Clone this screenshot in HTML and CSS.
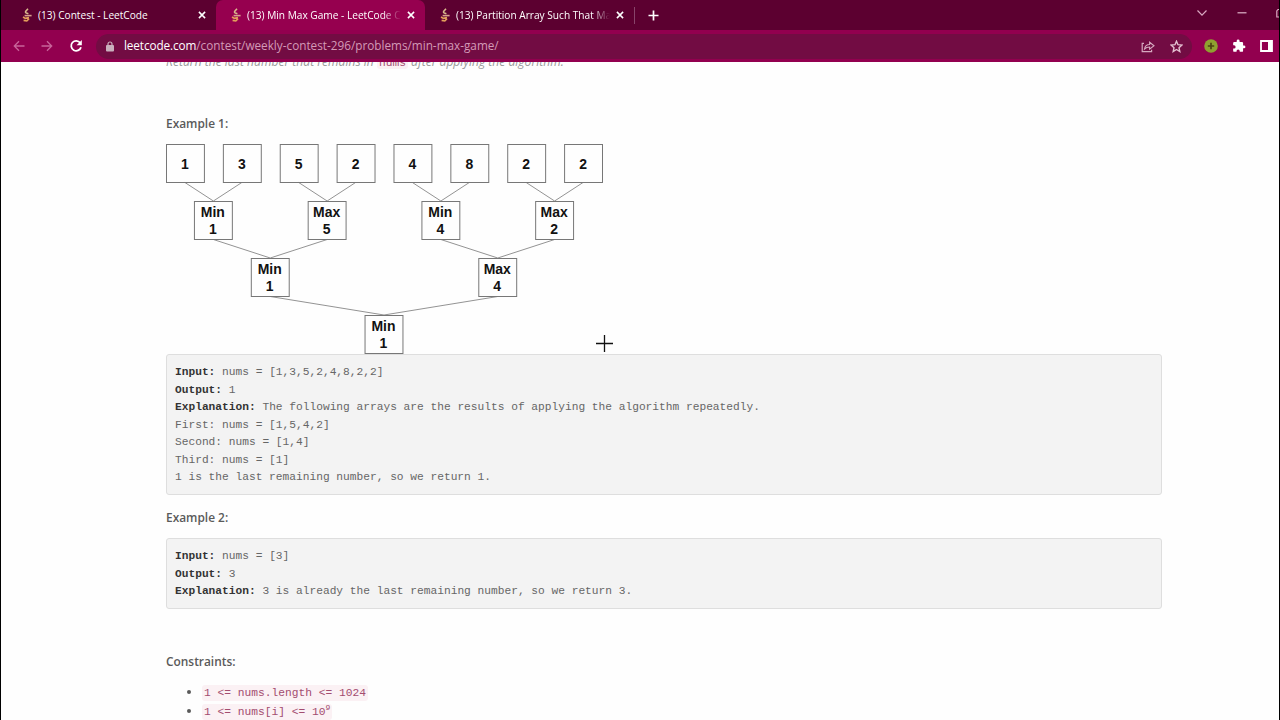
FILE: index.html
```
<!DOCTYPE html>
<html lang="en">
<head>
    <meta charset="UTF-8">
    <meta name="viewport" content="width=device-width, initial-scale=1.0">
    <title>(13) Min Max Game - LeetCode Contest</title>
    <link rel="stylesheet" href="styles.css">
</head>
<body>
    <svg class="defs" width="0" height="0">
        <symbol id="leetcode" viewBox="0 0 12 14">
            <path d="M7 .8 4.8 3.200Q4 4.500 5.400 5.100L7.400 5.700" fill="none" stroke="#d8b98c" stroke-width="1.6"/>
            <path d="M3.600 7.600h7" stroke="#d7a08b" stroke-width="1.6"/>
            <path d="M2 9 4.400 10.400 8 9.600M8 10.600 5.800 13 2.600 12.400" fill="none" stroke="#e3a05c" stroke-width="1.6"/>
        </symbol>
        <symbol id="close" viewBox="0 0 8 8">
            <path d="M.9.9 7.1 7.1M7.1.9.9 7.1" stroke="#fff" stroke-width="1.5"/>
        </symbol>
    </svg>

    <div class="browser">
        <div class="tab-bar">
            <div class="tab tab-first">
                <svg class="favicon"><use href="#leetcode"/></svg>
                <span class="tab-title">(13) Contest - LeetCode</span>
                <svg class="close"><use href="#close"/></svg>
            </div>
            <div class="tab active">
                <svg class="favicon"><use href="#leetcode"/></svg>
                <span class="tab-title fade">(13) Min Max Game - LeetCode Contest</span>
                <svg class="close"><use href="#close"/></svg>
            </div>
            <div class="tab">
                <svg class="favicon"><use href="#leetcode"/></svg>
                <span class="tab-title fade">(13) Partition Array Such That Maximum</span>
                <svg class="close"><use href="#close"/></svg>
            </div>
            <div class="tab-divider"></div>
            <svg class="new-tab" width="11" height="11" viewBox="0 0 11 11"><path d="M5.5.5v10M.5 5.5h10" stroke="#fff" stroke-width="1.7"/></svg>
            <div class="window-buttons">
                <svg width="12" height="8" viewBox="0 0 12 8"><path d="M1.5 1.5 6 6.2l4.5-4.7" fill="none" stroke="#d9a9c1" stroke-width="1.2"/></svg>
                <svg width="10" height="8" viewBox="0 0 10 8"><path d="M.5 3.8h9" stroke="#dfb5ca" stroke-width="1.2"/></svg>
                <svg width="3" height="10" viewBox="0 0 3 10"><path d="M3 1.5H2L.8 3v6H3" fill="none" stroke="#d9a9c1" stroke-width="1.2"/></svg>
            </div>
        </div>

        <div class="toolbar">
            <div class="nav">
                <svg width="12" height="12" viewBox="0 0 12 12"><path d="M11.5 6H1.5M6 1.3 1.3 6 6 10.7" fill="none" stroke="#c8649a" stroke-width="1.3"/></svg>
                <svg width="12" height="12" viewBox="0 0 12 12"><path d="M.5 6h10M6 1.3 10.7 6 6 10.7" fill="none" stroke="#c8649a" stroke-width="1.3"/></svg>
                <svg width="14" height="14" viewBox="0 0 14 14"><path d="M11.2 3.8A5 5 0 1 0 12 8.2" fill="none" stroke="#fff" stroke-width="1.8"/><path d="M12.8 1v5.2H7.6z" fill="#fff"/></svg>
            </div>
            <div class="address">
                <svg class="lock" width="8" height="11" viewBox="0 0 8 11"><path d="M2 5V3a2 2 0 0 1 4 0v2" fill="none" stroke="#c9b0bd" stroke-width="1.2"/><rect y="4" width="8" height="6.5" rx="1" fill="#c9b0bd"/></svg>
                <span class="url"><b>leetcode.com</b>/contest/weekly-contest-296/problems/min-max-game/</span>
                <svg class="share" width="14" height="13" viewBox="0 0 14 13"><path d="M3 3.3H1.2v8.4h9.4V9.8" fill="none" stroke="#d5a9bf" stroke-width="1.2"/><path d="M3.5 9C4 6 5.8 4.5 8.6 4.500V2.2L13 5.8 8.6 9.2V7C6.5 7 5 7.5 3.5 9z" fill="none" stroke="#d5a9bf" stroke-width="1.1"/></svg>
                <svg width="13" height="13" viewBox="0 0 13 13"><path d="m6.5 1.2 1.5 3.5 3.9.4L9 7.7l.8 3.8-3.3-2-3.3 2L4 7.7 1.1 5.1 5 4.7z" fill="none" stroke="#e3bfd0" stroke-width="1.4"/></svg>
            </div>
            <div class="extensions">
                <svg width="14" height="14" viewBox="0 0 14 14"><circle cx="7" cy="7" r="6.8" fill="#8fa030"/><path d="M7 3.8v6.4M3.8 7h6.4" stroke="#4d4212" stroke-width="1.7"/></svg>
                <svg width="14" height="14" viewBox="0 0 24 24"><path d="M20.5 11H19V7a2 2 0 0 0-2-2h-4V3.500a2.5 2.5 0 0 0-5 0V5H4a2 2 0 0 0-2 2v3.8h1.500a2.7 2.7 0 0 1 0 5.400H2V20a2 2 0 0 0 2 2h3.800v-1.500a2.700 2.700 0 0 1 5.400 0V22H17a2 2 0 0 0 2-2v-4h1.500a2.500 2.500 0 0 0 0-5z" fill="#fff"/></svg>
                <svg width="13" height="12" viewBox="0 0 13 12"><path d="M1 1h11v10H1z" fill="none" stroke="#fff" stroke-width="1.8"/><path d="M8 1h4v10H8z" fill="#fff"/></svg>
            </div>
        </div>

        <div class="content">
            <div class="clipped-line"><em>Return the last number that remains in <code>nums</code> after applying the algorithm.</em></div>

            <p class="heading first-heading">Example 1:</p>
            <svg class="tree" width="437" height="210" viewBox="0 0 438 210" preserveAspectRatio="none">
                <g class="edges">
                    <path d="M19 38.500 47.500 57 76 38.500M133 38.500 161.500 57 190 38.500M247 38.500 275.500 57 304 38.500M361 38.500 389.500 57 418 38.500"/>
                    <path d="M47.500 95.500 104.500 114 161.500 95.500M275.500 95.500 332.500 114 389.500 95.500"/>
                    <path d="M104.500 152.500 218.500 171 332.500 152.500"/>
                </g>
                <g class="boxes">
                    <rect x=".5" y=".5" width="38" height="38"/>
                    <rect x="57.500" y=".5" width="38" height="38"/>
                    <rect x="114.500" y=".5" width="38" height="38"/>
                    <rect x="171.500" y=".5" width="38" height="38"/>
                    <rect x="228.500" y=".5" width="38" height="38"/>
                    <rect x="285.500" y=".5" width="38" height="38"/>
                    <rect x="342.500" y=".5" width="38" height="38"/>
                    <rect x="399.500" y=".5" width="38" height="38"/>
                    <rect x="28.500" y="57.500" width="38" height="38"/>
                    <rect x="142.500" y="57.500" width="38" height="38"/>
                    <rect x="256.500" y="57.500" width="38" height="38"/>
                    <rect x="370.500" y="57.500" width="38" height="38"/>
                    <rect x="85.500" y="114.500" width="38" height="38"/>
                    <rect x="313.500" y="114.500" width="38" height="38"/>
                    <rect x="199.500" y="171.500" width="38" height="38"/>
                </g>
                <g class="labels">
                    <text x="19" y="25">1</text>
                    <text x="76" y="25">3</text>
                    <text x="133" y="25">5</text>
                    <text x="190" y="25">2</text>
                    <text x="247" y="25">4</text>
                    <text x="304" y="25">8</text>
                    <text x="361" y="25">2</text>
                    <text x="418" y="25">2</text>
                    <text x="47" y="73.500">Min</text><text x="47" y="90.500">1</text>
                    <text x="161" y="73.500">Max</text><text x="161" y="90.500">5</text>
                    <text x="275" y="73.500">Min</text><text x="275" y="90.500">4</text>
                    <text x="389" y="73.500">Max</text><text x="389" y="90.500">2</text>
                    <text x="104" y="130.500">Min</text><text x="104" y="147.500">1</text>
                    <text x="332" y="130.500">Max</text><text x="332" y="147.500">4</text>
                    <text x="218" y="187.500">Min</text><text x="218" y="204.500">1</text>
                </g>
            </svg>
<pre><b>Input:</b> nums = [1,3,5,2,4,8,2,2]
<b>Output:</b> 1
<b>Explanation:</b> The following arrays are the results of applying the algorithm repeatedly.
First: nums = [1,5,4,2]
Second: nums = [1,4]
Third: nums = [1]
1 is the last remaining number, so we return 1.</pre>

            <p class="heading second-heading">Example 2:</p>
<pre><b>Input:</b> nums = [3]
<b>Output:</b> 3
<b>Explanation:</b> 3 is already the last remaining number, so we return 3.</pre>

            <p class="heading constraints-heading">Constraints:</p>
            <ul>
                <li><code>1 &lt;= nums.length &lt;= 1024</code></li>
                <li><code>1 &lt;= nums[i] &lt;= 10<sup>9</sup></code></li>
            </ul>
        </div>

        <svg class="cursor" width="17" height="17" viewBox="0 0 17 17"><path d="M8.500 0v17M0 8.500h17" stroke="#111" stroke-width="1.3"/></svg>
    </div>
</body>
</html>
```
FILE: styles.css
```
* {
    box-sizing: border-box;
}

body {
    margin: 0;
    background-color: #000;
    font-family: 'Open Sans', 'Noto Sans', sans-serif;
    overflow: hidden;
}

svg {
    display: block;
    flex: none;
}

.defs {
    position: absolute;
}

.browser {
    width: 1278px;
    height: 720px;
    margin: 0 1px;
    background-color: #fefefe;
    overflow: hidden;
}

/* Tabs */
.tab-bar {
    display: flex;
    align-items: center;
    height: 30px;
    background-color: #5c0030;
}

.tab {
    display: flex;
    align-items: center;
    width: 209px;
    height: 30px;
    padding: 0 10px 0 14px;
}

.tab-first {
    width: 215px;
    padding-left: 20px;
}

.tab.active {
    background-color: #96004f;
    border-radius: 7px 7px 0 0;
}

.favicon {
    width: 12px;
    height: 14px;
    margin-right: 5px;
}

.tab-title {
    flex: 1;
    margin-right: 6px;
    color: #fff;
    font-size: 10.15px;
    font-weight: 500;
    line-height: 28px;
    white-space: nowrap;
    overflow: hidden;
}

.fade {
    -webkit-mask-image: linear-gradient(to right, #000 88%, transparent);
    mask-image: linear-gradient(to right, #000 88%, transparent);
}

.close {
    width: 8px;
    height: 8px;
}

.tab-divider {
    width: 1px;
    height: 17px;
    background-color: #88446a;
}

.new-tab {
    margin-left: 13px;
}

.window-buttons {
    display: flex;
    align-items: center;
    gap: 29px;
    margin-left: auto;
    padding-bottom: 4px;
}

/* Toolbar */
.toolbar {
    display: flex;
    align-items: center;
    height: 32px;
    background-color: #92004f;
}

.nav {
    display: flex;
    align-items: center;
    gap: 16px;
    width: 95px;
    padding-left: 12px;
}

.address {
    display: flex;
    align-items: center;
    width: 1096px;
    height: 25px;
    padding: 0 9px 0 10px;
    border-radius: 13px;
    background-color: #720c43;
}

.lock {
    margin-right: 10px;
}

.url {
    padding-bottom: 1px;
    color: #d49ab7;
    font-size: 11.76px;
    line-height: 23px;
    white-space: nowrap;
}

.url b {
    color: #fff;
    font-weight: 500;
    letter-spacing: -0.1px;
}

.share {
    margin-left: auto;
    margin-right: 15px;
}

.extensions {
    display: flex;
    align-items: center;
    gap: 14px;
    padding-left: 12px;
}

/* Problem statement */
.content {
    width: 1161px;
    padding-left: 165px;
    color: #5a5a5a;
    font-size: 12px;
}

.clipped-line {
    display: flex;
    align-items: flex-end;
    height: 8px;
    color: #999;
    font-size: 12.08px;
    line-height: 13px;
    overflow: hidden;
}

.clipped-line code {
    padding: 0 2px;
    font-style: normal;
}

.heading {
    margin: 0;
    font-size: 11.9px;
    font-weight: 600;
    line-height: 18px;
}

.first-heading {
    padding: 44px 0 1px;
}

.tree {
    margin-top: 11px;
}

.edges,
.boxes {
    fill: none;
    stroke: #777;
    stroke-width: 1;
}

.edges {
    stroke-width: 0.8;
}

.labels {
    fill: #111;
    font: bold 14px 'Liberation Sans', Arial, sans-serif;
    text-anchor: middle;
}

pre {
    margin: 0;
    padding: 9px 8px 7.5px;
    border: 1px solid #dedede;
    border-radius: 3px;
    background-color: #f3f3f3;
    color: #666;
    font-family: 'Liberation Mono', Consolas, monospace;
    font-size: 11.21px;
    line-height: 17.5px;
}

pre b {
    color: #333;
}

.second-heading {
    padding: 12.5px 0 12.5px;
}

.constraints-heading {
    padding-top: 43px;
}

ul {
    margin: 12px 0 0;
    padding-left: 36px;
}

li {
    height: 19px;
    line-height: 19px;
}

code {
    padding: 2px;
    border-radius: 3px;
    background-color: #fbf1f4;
    color: #a34d70;
    font-family: 'Liberation Mono', Consolas, monospace;
    font-size: 11.25px;
}

sup {
    font-size: 8px;
    line-height: 0;
}

.cursor {
    position: absolute;
    left: 596px;
    top: 335px;
}
```
